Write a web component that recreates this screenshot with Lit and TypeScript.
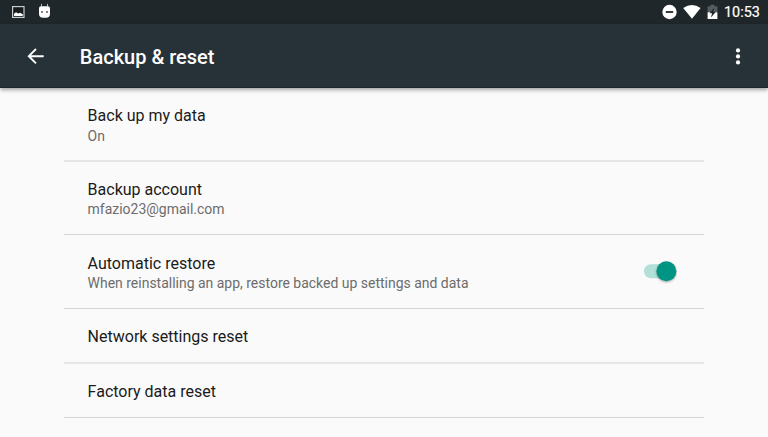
import { LitElement, html, svg, css, nothing } from "lit";
import { customElement, property } from "lit/decorators.js";

@customElement("status-bar")
class StatusBar extends LitElement {
  static styles = css`
    :host { display: flex; justify-content: space-between; height: 24px; background: #1f272a; color: #fff; }
    .left, .right { display: flex; align-items: center; }
    .left { padding-left: 10px; gap: 10px; }
    .right { padding-right: 8px; }
    svg { display: block; }
    .dnd { margin-right: 5px; }
    .wifi { margin-right: 6px; }
    .battery { margin-right: 6px; }
    .time { font-size: 14.4px; line-height: 24px; font-weight: 400; -webkit-text-stroke: .2px #fff; width: 36px; white-space: nowrap; padding-top: 2px; }
  `;
  render() {
    return html`
      <div class="left">
        <svg width="16" height="24" viewBox="0 0 16 24">
          <rect x="2.6" y="6.6" width="11.400" height="10.8" fill="#151b1d" stroke="#c9cccd" stroke-width="1.2" />
          <path d="M4 16v-2.300l2-1.400 2.200 1.200 1.800-.8 2.800 1.600V16z" fill="#fff" />
        </svg>
        <svg width="16" height="24" viewBox="0 0 16 24">
          <path d="M5.500 3.800v2.800M11.500 3.800v2.800" stroke="#b0b4b5" stroke-width="1" />
          <path d="M3 8.300Q3 6.300 5 6.300h7q2 0 2 2V14q0 3.700-4 3.700H7Q3 17.700 3 14z" fill="#fff" />
          <circle cx="6" cy="11.900" r=".9" fill="#3a4144" />
          <circle cx="11" cy="11.900" r=".9" fill="#3a4144" />
        </svg>
      </div>
      <div class="right">
        <svg class="dnd" width="16" height="24" viewBox="0 0 16 24">
          <circle cx="7.500" cy="12" r="7.200" fill="#fff" />
          <rect x="3.800" y="11.100" width="7.400" height="1.800" fill="#1f272a" />
        </svg>
        <svg class="wifi" width="18" height="24" viewBox="0 0 18 24">
          <path d="M.2 8Q9 2.200 17.600 8L9 18.800z" fill="#fff" />
        </svg>
        <svg class="battery" width="11" height="24" viewBox="0 0 11 24">
          <path d="M.6 6.200h3V4.800h3.800v1.400h3V12.500H.6z" fill="#565d60" />
          <path d="M.6 12.300h9.800V19H.6z" fill="#fff" />
          <path d="M7.200 7.800L2.600 13.200h2.500l-1.200 4.300L8.700 12H6.300z" fill="#1f272a" />
        </svg>
        <span class="time">10:53</span>
      </div>`;
  }
}

@customElement("app-toolbar")
class AppToolbar extends LitElement {
  @property() heading = "";
  static styles = css`
    :host {
      display: flex; align-items: center; height: 64px; box-sizing: border-box;
      background: #263238; border-bottom: 1px solid #1c272c; color: #fff;
      box-shadow: 0 2px 4px rgba(0, 0, 0, .35); position: relative;
    }
    svg { display: block; flex: none; }
    .back { margin-left: 24px; }
    h1 { flex: 1; margin: 0 0 0 31.800px; font-size: 20px; line-height: 24px; font-weight: 500; padding-top: 3px; }
    .more { margin-right: 18px; }
  `;
  render() {
    return html`
      <svg class="back" width="24" height="24" viewBox="0 0 24 24">
        <path d="M12 5L4.800 12.200l7.200 7.200M4.800 12.200H19.700" fill="none" stroke="#fff" stroke-width="1.900" />
      </svg>
      <h1>${this.heading}</h1>
      <svg class="more" width="24" height="24" viewBox="0 0 24 24" fill="#fff">
        ${[6.4, 12.4, 18.4].map((y) => svg`<circle cx="12" cy=${y} r="2.1" />`)}
      </svg>`;
  }
}

@customElement("setting-row")
class SettingRow extends LitElement {
  @property() label = "";
  @property() summary = "";
  @property({ type: Boolean }) toggle = false;
  static styles = css`
    :host { display: flex; align-items: flex-start; box-sizing: border-box; height: 54px; padding: 17px 27px 0 23.600px; border-bottom: 1px solid #d5d5d5; }
    :host([summary]) { height: 74px; padding-top: 18px; }
    .text { flex: 1; white-space: nowrap; }
    .label { font-size: 16px; line-height: 22px; color: #1b1b1b; }
    .summary { font-size: 13.970px; line-height: 18px; margin-top: var(--summary-gap, -1px); color: #6c6c6c; }
    .switch { display: block; margin-top: 7px; }
    .thumb { filter: drop-shadow(0 1px 1px rgba(0, 0, 0, .35)); }
  `;
  render() {
    return html`
      <div class="text">
        <div class="label">${this.label}</div>
        ${this.summary ? html`<div class="summary">${this.summary}</div>` : nothing}
      </div>
      ${this.toggle ? html`<svg class="switch" width="34" height="24" viewBox="0 0 34 24">
        <rect x="1" y="4.300" width="28" height="14" rx="7" fill="#b2dfd8" />
        <circle class="thumb" cx="23.400" cy="11.300" r="10" fill="#009583" />
      </svg>` : nothing}`;
  }
}

@customElement("app-root")
class AppRoot extends LitElement {
  static styles = css`
    :host { display: block; height: 437px; overflow: hidden; background: #fafafa; font-family: Roboto, "Noto Sans", sans-serif; }
    main { margin: 0 64px; }
    .soft { border-bottom: 2px solid #e6e6e6; }
    .first { padding-top: 17px; --summary-gap: 0px; }
    .account { height: 73px; padding-top: 17px; }
    .network { height: 55px; }
  `;
  render() {
    return html`
      <status-bar></status-bar>
      <app-toolbar heading="Backup &amp; reset"></app-toolbar>
      <main>
        <setting-row class="first soft" label="Back up my data" summary="On"></setting-row>
        <setting-row class="account" label="Backup account" summary="mfazio23@gmail.com"></setting-row>
        <setting-row label="Automatic restore" summary="When reinstalling an app, restore backed up settings and data" toggle></setting-row>
        <setting-row class="network soft" label="Network settings reset"></setting-row>
        <setting-row label="Factory data reset"></setting-row>
      </main>`;
  }
}
